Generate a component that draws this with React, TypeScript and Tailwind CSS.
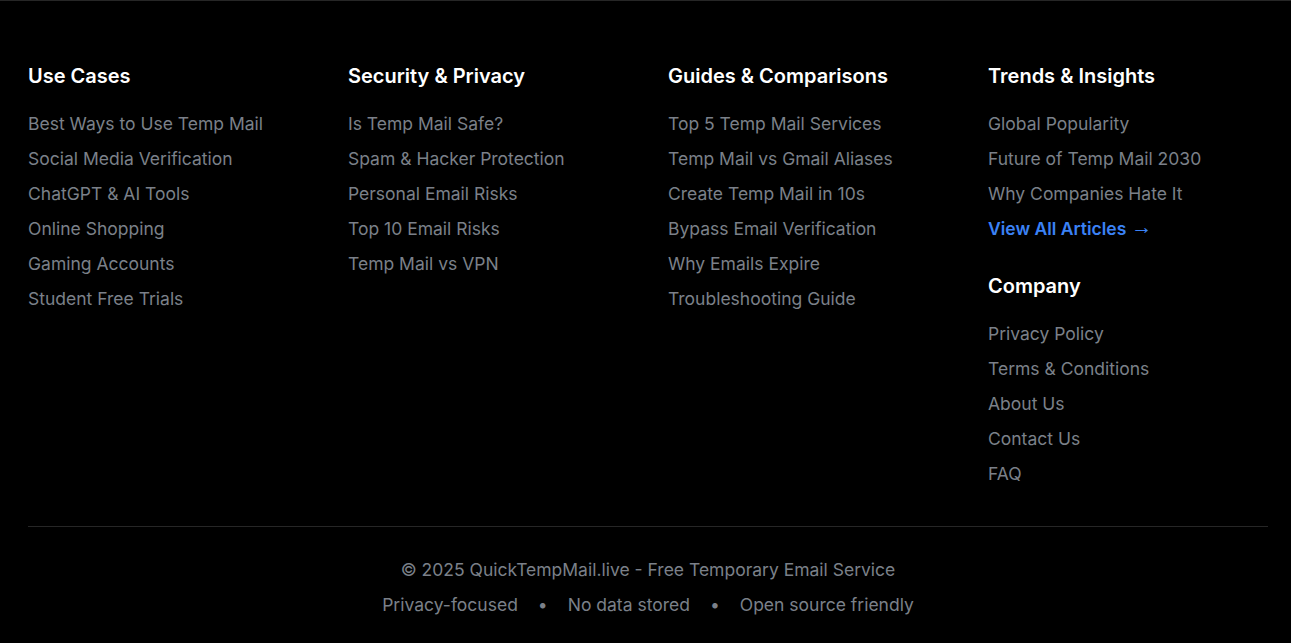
import React from "react";

type Section = {
  title: string;
  links: string[];
};

const COLUMNS: Section[] = [
  {
    title: "Use Cases",
    links: [
      "Best Ways to Use Temp Mail",
      "Social Media Verification",
      "ChatGPT & AI Tools",
      "Online Shopping",
      "Gaming Accounts",
      "Student Free Trials",
    ],
  },
  {
    title: "Security & Privacy",
    links: [
      "Is Temp Mail Safe?",
      "Spam & Hacker Protection",
      "Personal Email Risks",
      "Top 10 Email Risks",
      "Temp Mail vs VPN",
    ],
  },
  {
    title: "Guides & Comparisons",
    links: [
      "Top 5 Temp Mail Services",
      "Temp Mail vs Gmail Aliases",
      "Create Temp Mail in 10s",
      "Bypass Email Verification",
      "Why Emails Expire",
      "Troubleshooting Guide",
    ],
  },
];

const FooterSection: React.FC<{ section: Section; extra?: React.ReactNode }> = ({
  section,
  extra,
}) => (
  <div>
    <h3 className="text-[20px] leading-[28px] font-semibold text-white">{section.title}</h3>
    <ul className="mt-[22px] flex flex-col gap-[11px]">
      {section.links.map((link) => (
        <li key={link}>
          <a href="#" className="text-[17.5px] leading-6 text-[#7b8089] hover:text-gray-300">
            {link}
          </a>
        </li>
      ))}
      {extra}
    </ul>
  </div>
);

const App: React.FC = () => {
  return (
    <footer
      className="min-h-[643px] bg-black border-t border-[#262626] pl-7 pr-[23px] pt-[61px] pb-[26px]"
      style={{ fontFamily: "Inter, 'Noto Sans', sans-serif" }}
    >
      <div className="grid grid-cols-4 gap-10">
        {COLUMNS.map((s) => (
          <FooterSection key={s.title} section={s} />
        ))}

        <div className="flex flex-col gap-[31px]">
          <FooterSection
            section={{
              title: "Trends & Insights",
              links: ["Global Popularity", "Future of Temp Mail 2030", "Why Companies Hate It"],
            }}
            extra={
              <li>
                <a
                  href="#"
                  className="flex items-center gap-[5px] text-[17.5px] leading-6 font-semibold text-[#3b82f6]"
                >
                  <span>View All Articles</span>
                  <span
                    className="font-normal text-[21px] leading-6 -translate-y-[2px]"
                    style={{ fontFamily: "'Liberation Sans', sans-serif" }}
                  >
                    →
                  </span>
                </a>
              </li>
            }
          />
          <FooterSection
            section={{
              title: "Company",
              links: ["Privacy Policy", "Terms & Conditions", "About Us", "Contact Us", "FAQ"],
            }}
          />
        </div>
      </div>

      <div className="mt-10 border-t border-[#262626] pt-[31px] text-center text-[17.5px] leading-6 text-[#7b8089]">
        <p>© 2025 QuickTempMail.live - Free Temporary Email Service</p>
        <div className="mt-[11px] flex items-center justify-center gap-[20px]">
          <span>Privacy-focused</span>
          <span>•</span>
          <span>No data stored</span>
          <span>•</span>
          <span>Open source friendly</span>
        </div>
      </div>
    </footer>
  );
};

export default App;
